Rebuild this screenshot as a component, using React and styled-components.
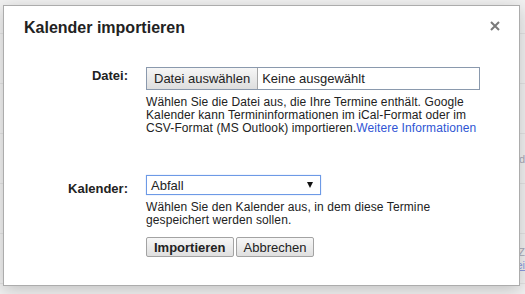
import React from 'react'
import styled, {createGlobalStyle} from 'styled-components'

const GlobalStyle = createGlobalStyle`
	html, body {
		margin: 0;
		padding: 0;
	}
	body {
		background: #f1f1f1;
		font-family: "Liberation Sans", Arial, sans-serif;
		color: #222;
		overflow: hidden;
	}
`

const Page = styled.div`
	position: relative;
	width: 525px;
	height: 294px;
	overflow: hidden;
`
const Behind = styled.div`
	display: flex;
	flex-direction: column;
`
const BehindRow = styled.div`
	height: ${p => p.h || 50}px;
	flex-shrink: 0;
	box-sizing: border-box;
	border-bottom: 1px solid #e3e3e3;
	display: flex;
	flex-direction: column;
	align-items: flex-end;
	justify-content: center;
	gap: 1px;
	font-size: 11px;
	line-height: 12px;
	color: #a9a9b8;
`
const BehindLink = styled.span`
	color: #8d9be0;
	text-decoration: underline;
`
const Dialog = styled.div`
	position: absolute;
	left: 3px;
	top: 5px;
	width: 517px;
	height: 281px;
	box-sizing: border-box;
	border: 1px solid #acacac;
	background: #fff;
	box-shadow: 0 4px 16px rgba(0, 0, 0, 0.2);
	padding: 12px 20px 28px 20px;
`
const Title = styled.h2`
	margin: 0;
	font-size: 16px;
	line-height: 20px;
	font-weight: bold;
	color: #222;
`
const Close = styled.button`
	position: absolute;
	top: 15px;
	right: 19px;
	width: 10px;
	height: 10px;
	padding: 0;
	border: none;
	background: none;
	display: flex;
	cursor: pointer;
`
const Form = styled.div`
	margin-top: 29px;
	display: grid;
	grid-template-columns: 104px 334px;
	column-gap: 18px;
	row-gap: 40px;
`
const Label = styled.label`
	text-align: right;
	font-size: 13px;
	line-height: 15px;
	font-weight: bold;
	padding-top: ${p => p.offset || 0}px;
`
const Field = styled.div`
	display: flex;
	flex-direction: column;
	align-items: flex-start;
`
const FileBox = styled.div`
	width: 100%;
	height: 23px;
	box-sizing: border-box;
	border: 1px solid #8a99ad;
	display: flex;
	align-items: center;
	font-size: 13px;
`
const FileButton = styled.button`
	height: 100%;
	padding: 0 7px;
	border: none;
	border-right: 1px solid #a6a6a6;
	background: linear-gradient(#f6f6f6, #dedede);
	font-family: inherit;
	font-size: 13px;
	color: #222;
`
const FileName = styled.span`
	padding-left: 4px;
`
const Help = styled.p`
	margin: 6px 0 0 0;
	font-size: 12px;
	line-height: 13px;
	color: #222;
	letter-spacing: 0.1px;
`
const Link = styled.a`
	color: #2f55d4;
	text-decoration: none;
`
const Select = styled.div`
	width: 175px;
	height: 20px;
	box-sizing: border-box;
	border: 1px solid #6d9ae6;
	box-shadow: 0 0 1px #a9c4f3;
	display: flex;
	align-items: center;
	justify-content: space-between;
	padding: 0 7px 0 4px;
	font-size: 13px;
`
const Arrow = styled.span`
	width: 0;
	height: 0;
	border-left: 3px solid transparent;
	border-right: 3px solid transparent;
	border-top: 6px solid #111;
`
const Buttons = styled.div`
	display: flex;
	gap: 2px;
	margin-top: 10px;
`
const Button = styled.button`
	height: 20px;
	padding: 0 7px;
	border: 1px solid #a3a3a3;
	border-radius: 2px;
	background: linear-gradient(#f7f7f7, #dfdfdf);
	font-family: inherit;
	font-size: 13px;
	font-weight: ${p => (p.primary ? 'bold' : 'normal')};
	color: #222;
	cursor: pointer;
`

export default function App() {
	return (
		<Page>
			<GlobalStyle />
			<Behind>
				<BehindRow h={34} />
				<BehindRow />
				<BehindRow />
				<BehindRow>d</BehindRow>
				<BehindRow />
				<BehindRow>
					<span>Z</span>
					<BehindLink>ei</BehindLink>
				</BehindRow>
			</Behind>
			<Dialog>
				<Title>Kalender importieren</Title>
				<Close aria-label='Schließen'>
					<svg width='10' height='10' viewBox='0 0 10 10'>
						<path d='M1 1L9 9M9 1L1 9' stroke='#7a7a7a' strokeWidth='2' />
					</svg>
				</Close>
				<Form>
					<Label offset={1}>Datei:</Label>
					<Field>
						<FileBox>
							<FileButton>Datei auswählen</FileButton>
							<FileName>Keine ausgewählt</FileName>
						</FileBox>
						<Help>
							Wählen Sie die Datei aus, die Ihre Termine enthält. Google
							<br />
							Kalender kann Termininformationen im iCal-Format oder im
							<br />
							CSV-Format (MS Outlook) importieren.
							<Link href='#'>Weitere Informationen</Link>
						</Help>
					</Field>
					<Label offset={6}>Kalender:</Label>
					<Field>
						<Select>
							<span>Abfall</span>
							<Arrow />
						</Select>
						<Help>
							Wählen Sie den Kalender aus, in dem diese Termine
							<br />
							gespeichert werden sollen.
						</Help>
						<Buttons>
							<Button primary>Importieren</Button>
							<Button>Abbrechen</Button>
						</Buttons>
					</Field>
				</Form>
			</Dialog>
		</Page>
	)
}
